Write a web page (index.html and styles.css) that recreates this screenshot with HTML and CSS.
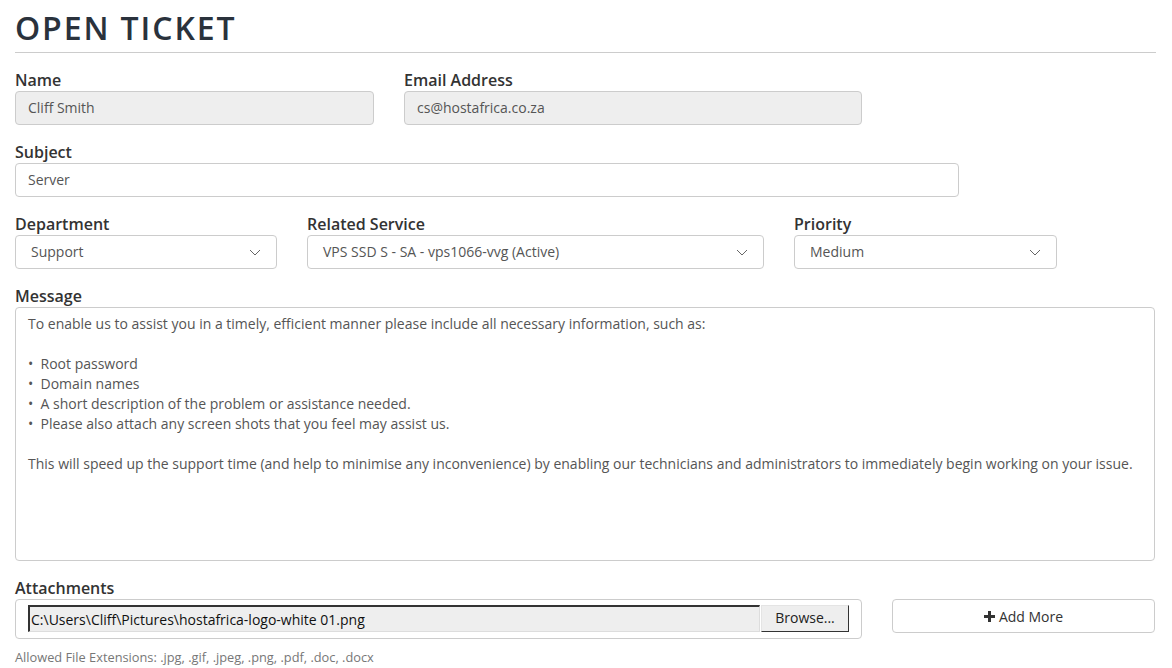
FILE: index.html
```html
<!DOCTYPE html>
<html>
<head>
	<title>Open Ticket</title>
	<link rel="stylesheet" href="styles.css">
</head>
<body>

<div id="open-ticket">
	<h1 class="page-title">Open Ticket</h1>

	<form class="ticket-form">
		<div class="form-row row-contact">
			<div class="form-group">
				<label>Name</label>
				<div class="form-control disabled">Cliff Smith</div>
			</div>
			<div class="form-group">
				<label>Email Address</label>
				<div class="form-control disabled">cs@hostafrica.co.za</div>
			</div>
		</div>

		<div class="form-row row-subject">
			<div class="form-group">
				<label>Subject</label>
				<div class="form-control">Server</div>
			</div>
		</div>

		<div class="form-row row-selects">
			<div class="form-group">
				<label>Department</label>
				<div class="form-control select">
					<span>Support</span>
					<svg class="chevron" width="12" height="7" viewBox="0 0 12 7"><path d="M1 1 L6 6 L11 1" fill="none" stroke="#666" stroke-width="1"/></svg>
				</div>
			</div>
			<div class="form-group">
				<label>Related Service</label>
				<div class="form-control select">
					<span>VPS SSD S - SA - vps1066-vvg (Active)</span>
					<svg class="chevron" width="12" height="7" viewBox="0 0 12 7"><path d="M1 1 L6 6 L11 1" fill="none" stroke="#666" stroke-width="1"/></svg>
				</div>
			</div>
			<div class="form-group">
				<label>Priority</label>
				<div class="form-control select">
					<span>Medium</span>
					<svg class="chevron" width="12" height="7" viewBox="0 0 12 7"><path d="M1 1 L6 6 L11 1" fill="none" stroke="#666" stroke-width="1"/></svg>
				</div>
			</div>
		</div>

		<div class="form-group">
			<label>Message</label>
			<div class="form-control message">
<p>To enable us to assist you in a timely, efficient manner please include all necessary information, such as:</p>
<p class="blank"></p>
<p>•&nbsp; Root password</p>
<p>•&nbsp; Domain names</p>
<p>•&nbsp; A short description of the problem or assistance needed.</p>
<p>•&nbsp; Please also attach any screen shots that you feel may assist us.</p>
<p class="blank"></p>
<p>This will speed up the support time (and help to minimise any inconvenience) by enabling our technicians and administrators to immediately begin working on your issue.</p>
			</div>
		</div>

		<div class="attachments">
			<label>Attachments</label>
			<div class="attach-row">
				<div class="file-box">
					<div class="file-input">
						<span class="file-path">C:\Users\Cliff\Pictures\hostafrica-logo-white 01.png</span>
						<span class="file-browse">Browse...</span>
					</div>
				</div>
				<div class="btn-add">
					<svg width="11" height="11" viewBox="0 0 11 11"><path d="M4 0h3v4h4v3H7v4H4V7H0V4h4z" fill="#333"/></svg>
					Add More
				</div>
			</div>
			<div class="help-text">Allowed File Extensions: .jpg, .gif, .jpeg, .png, .pdf, .doc, .docx</div>
		</div>
	</form>
</div>

</body>
</html>
```

FILE: styles.css
```css
body {
	margin: 0;
	padding: 0 15px;
	font-family: "Open Sans", "Liberation Sans", sans-serif;
	font-size: 14px;
	color: #333;
	background: #fff;
}
#open-ticket {
	width: 1141px;
}
.ticket-form {
	width: 1140px;
}
.page-title {
	margin: 0 0 15px;
	padding: 12px 0 8px;
	font-family: "Open Sans", sans-serif;
	font-weight: 600;
	font-size: 32px;
	line-height: 32px;
	letter-spacing: 1.9px;
	text-transform: uppercase;
	color: #2a323c;
	border-bottom: 1px solid #ccc;
}
.form-row {
	display: grid;
	column-gap: 30px;
}
.row-contact {
	grid-template-columns: 359px 458px;
}
.row-subject {
	grid-template-columns: 944px;
}
.row-selects {
	grid-template-columns: 262px 457px 263px;
}
.form-group {
	margin-bottom: 15px;
}
label {
	display: block;
	padding-top: 1px;
	font-size: 16px;
	font-weight: 600;
	line-height: 22px;
	color: #333;
}
.form-control {
	box-sizing: border-box;
	height: 34px;
	padding: 6px 12px;
	line-height: 20px;
	font-size: 14px;
	color: #555;
	background: #fff;
	border: 1px solid #ccc;
	border-radius: 4px;
}
.form-control.disabled {
	background: #eee;
}
.select {
	display: flex;
	align-items: center;
	justify-content: space-between;
	padding-left: 15px;
	padding-right: 15px;
}
.chevron {
	display: block;
}
.message {
	height: 254px;
	padding: 6px 12px;
}
.message p {
	margin: 0;
	min-height: 20px;
}
.attach-row {
	display: flex;
	gap: 30px;
	align-items: flex-start;
}
.file-box {
	box-sizing: border-box;
	width: 847px;
	height: 40px;
	padding: 5px 12px 6px;
	border: 1px solid #ccc;
	border-radius: 4px;
}
.file-input {
	display: flex;
	height: 27px;
}
.file-path {
	box-sizing: border-box;
	flex: 1;
	padding: 3px 0 0 1px;
	line-height: 20px;
	color: #111;
	background: #eee;
	border-top: 2px solid #333;
	border-left: 2px solid #333;
	border-right: 1px solid #ddd;
	border-bottom: 1px solid #ddd;
}
.file-browse {
	box-sizing: border-box;
	width: 88px;
	text-align: center;
	line-height: 24px;
	color: #222;
	background: #eee;
	border-top: 1px solid #e4e4e4;
	border-left: 1px solid #e4e4e4;
	border-right: 1px solid #333;
	border-bottom: 1px solid #333;
	margin-left: 1px;
}
.btn-add {
	box-sizing: border-box;
	width: 263px;
	height: 34px;
	display: flex;
	align-items: center;
	justify-content: center;
	gap: 4px;
	font-size: 14px;
	color: #333;
	border: 1px solid #ccc;
	border-radius: 4px;
	background: #fff;
}
.help-text {
	margin-top: 8px;
	font-size: 12.8px;
	line-height: 20px;
	color: #777;
}
```
